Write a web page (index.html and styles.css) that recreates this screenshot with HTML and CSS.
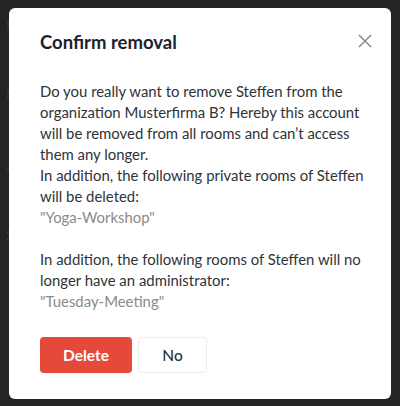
FILE: index.html
```html
<!DOCTYPE html>
<html lang="en">
<head>
<meta charset="utf-8">
<link rel="stylesheet" href="styles.css">
</head>
<body>
<div class="backdrop">
  <div class="bg-text">
    <div class="bg-row">Persönliche Daten</div>
    <div class="bg-row">Name</div>
    <div class="bg-row">2021</div>
    <div class="bg-row">Status</div>
  </div>
  <div class="modal">
    <div class="modal-head">
      <h2 class="title">Confirm removal</h2>
      <button class="close" aria-label="Close">
        <svg width="14" height="14" viewBox="0 0 14 14"><path d="M1 1L13 13M13 1L1 13" stroke="#8a8a8a" stroke-width="1.5" fill="none"/></svg>
      </button>
    </div>
    <div class="modal-body">
      <p>Do you really want to remove Steffen from the organization Musterfirma B? Hereby this account will be removed from all rooms and can’t access them any longer.</p>
      <p>In addition, the following private rooms of Steffen will be deleted:</p>
      <p class="muted">"Yoga-Workshop"</p>
      <p class="spaced">In addition, the following rooms of Steffen will no longer have an administrator:</p>
      <p class="muted">"Tuesday-Meeting"</p>
    </div>
    <div class="actions">
      <button class="btn btn-danger">Delete</button>
      <button class="btn btn-plain">No</button>
    </div>
  </div>
</div>
</body>
</html>
```
FILE: styles.css
```css
* { box-sizing: border-box; }
html, body { margin: 0; padding: 0; }
body {
  width: 400px;
  height: 406px;
  overflow: hidden;
  background: #242424;
  font-family: Lato, "Noto Sans", sans-serif;
}
.backdrop {
  position: relative;
  width: 400px;
  height: 406px;
  padding: 8px 9px 0 9px;
}
.bg-text {
  position: absolute;
  left: 6px;
  top: 16px;
  color: #3a3a3a;
  font-size: 14px;
}
.bg-row { height: 70px; }
.modal {
  position: relative;
  width: 382px;
  height: 391px;
  background: #fff;
  border-radius: 6px;
  padding: 0 22px 0 31px;
  display: flex;
  flex-direction: column;
}
.modal-head {
  display: flex;
  align-items: center;
  justify-content: space-between;
  height: 73px;
  padding-bottom: 5px;
}
.title {
  margin: 0;
  font-size: 18.5px;
  font-weight: 700;
  color: #1b2230;
}
.close {
  border: 0;
  background: none;
  padding: 0;
  margin-right: -3px;
  margin-top: -2px;
  width: 14px;
  height: 14px;
  display: flex;
}
.modal-body {
  font-size: 14.9px;
  line-height: 21px;
  color: #2f3337;
}
.modal-body p { margin: 0; }
.modal-body .muted { color: #8a8a8a; }
.modal-body .spaced { margin-top: 21px; }
.actions {
  display: flex;
  gap: 6px;
  margin-top: 25px;
}
.btn {
  height: 36px;
  border-radius: 4px;
  font-family: inherit;
  font-size: 15.5px;
  font-weight: 700;
  padding: 0;
}
.btn-danger {
  width: 92px;
  background: #e5493a;
  color: #fff;
  border: 0;
}
.btn-plain {
  width: 69px;
  background: #fff;
  color: #2f3337;
  border: 1px solid #ececec;
  font-weight: 500;
}
```
